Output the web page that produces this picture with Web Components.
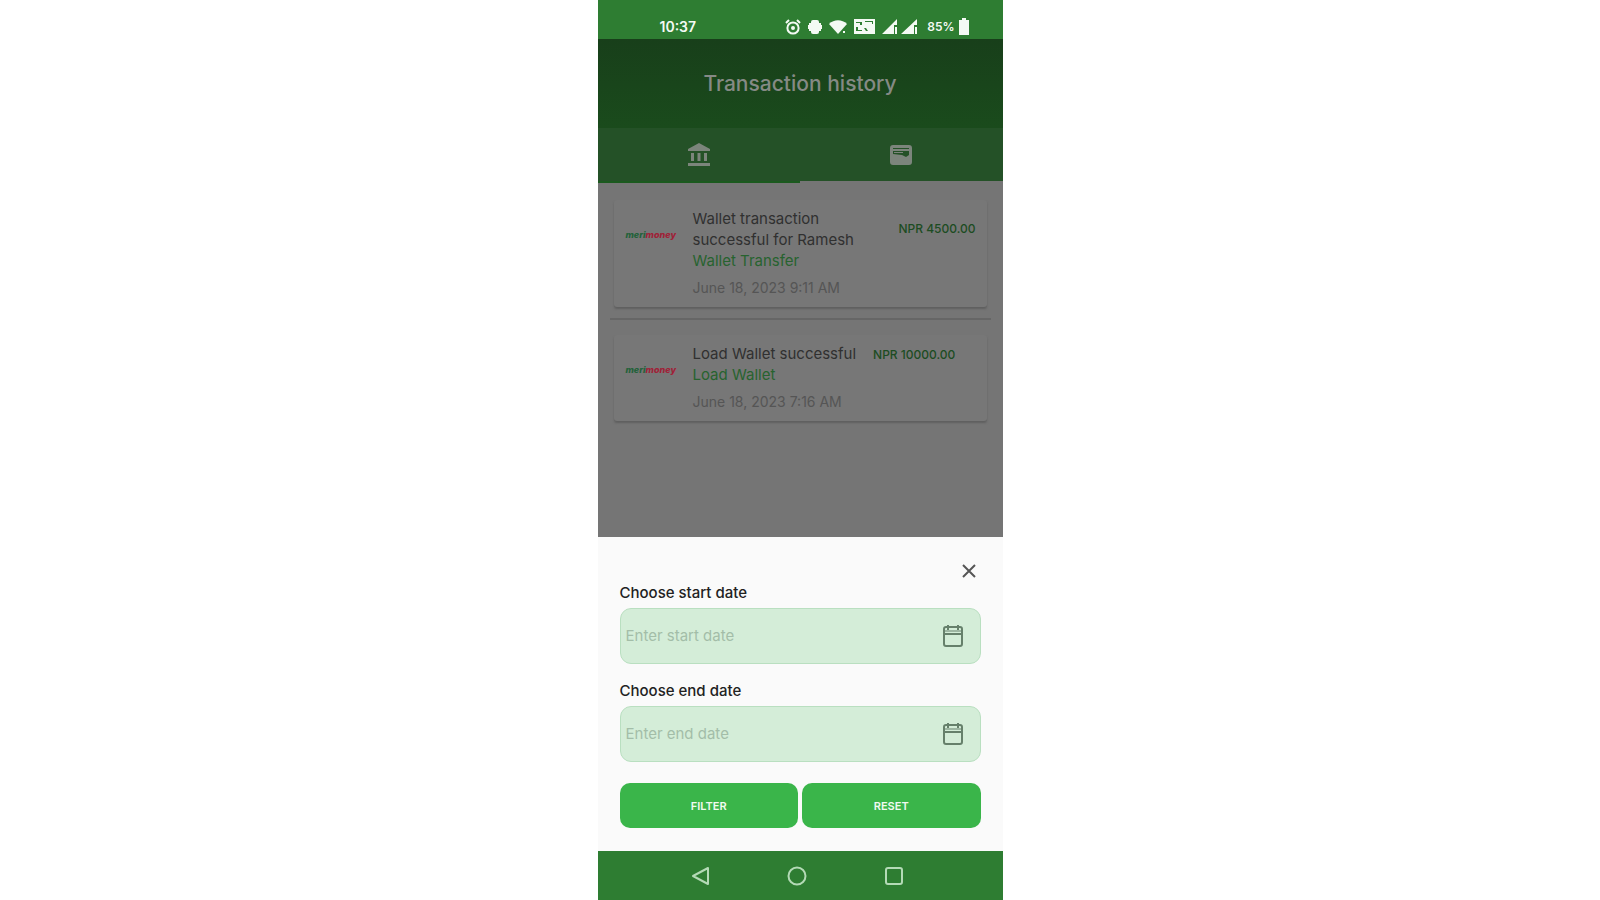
<!DOCTYPE html>
<html lang="en">
<head>
<meta charset="utf-8">
<meta name="viewport" content="width=device-width, initial-scale=1">
<title>Transaction history</title>
<style>
  body {
    margin: 0;
    background: #fff;
    font-family: Inter, "Open Sans", sans-serif;
  }
</style>
</head>
<body>
<wallet-app></wallet-app>

<script>
class StatusBar extends HTMLElement {
  constructor() {
    super();
    this.attachShadow({mode: "open"});
  }
  connectedCallback() {
    this.shadowRoot.innerHTML = `
      <style>
        :host {
          display: flex;
          align-items: center;
          justify-content: space-between;
          box-sizing: border-box;
          height: 39px;
          padding: 14px 34px 0 62px;
          background: #2e7d32;
          color: #f4faf4;
          font: 600 14px/16px Inter, sans-serif;
        }
        .icons { display: flex; align-items: center; gap: 7px; }
        .level { display: flex; align-items: center; gap: 4px; font-size: 12px; }
        svg { display: block; fill: currentColor; }
        .alarm { fill: none; stroke: currentColor; stroke-width: 2; }
      </style>
      <span>10:37</span>
      <div class="icons">
        <svg class="alarm" width="16" height="16" viewBox="0 0 16 16">
          <circle cx="8" cy="9" r="5.6"/><path d="M1 4l3-3M15 4l-3-3"/><circle cx="8" cy="9" r="1"/>
        </svg>
        <svg width="14" height="16" viewBox="0 0 14 16">
          <rect x="3" y="1" width="8" height="14" rx="2"/><path d="M1 4h2v8H1zM11 4h2v8h-2zM0 6h1v4H0zM13 6h1v4h-1z"/>
        </svg>
        <svg width="18" height="14" viewBox="0 0 18 14"><path d="M0 4C5-1 13-1 18 4L9 14z"/><path d="M14 11h2v2h-2z"/></svg>
        <svg width="21" height="15" viewBox="0 0 21 15">
          <path fill-rule="evenodd" d="M0 0h21v15H0zM2 3v1h4v2h2V3zM2 8v4h6v-1H4V8zM11 2v1h7v2h1V2zM10 9l2 3h2l-2-3z"/>
        </svg>
        <svg width="38" height="15" viewBox="0 0 38 15">
          <path d="M15 0v6h-3v9H0zM13 8h2v7h-2zM35 0v6h-3v9H19zM33 8h2v7h-2z"/>
        </svg>
        <span class="level">85%
          <svg width="10" height="17" viewBox="0 0 10 17"><path d="M3 0h4v2h3v15H0V2h3z"/></svg>
        </span>
      </div>`;
  }
}
customElements.define("status-bar", StatusBar);

class HistoryHeader extends HTMLElement {
  constructor() {
    super();
    this.attachShadow({mode: "open"});
  }
  connectedCallback() {
    this.shadowRoot.innerHTML = `
      <style>
        :host { display: block; color: #858a85; }
        h1 {
          box-sizing: border-box;
          height: 89px;
          margin: 0;
          padding-top: 30px;
          background: linear-gradient(#183f1a, #1a4b1c);
          font-size: 21px;
          line-height: 30px;
          font-weight: 500;
          text-align: center;
        }
        nav { display: grid; grid-template-columns: 1fr 1fr; background: #245127; }
        button {
          display: grid;
          place-items: center;
          height: 55px;
          padding: 0;
          border: 0;
          border-bottom: 2px solid #1b5a1e;
          background: none;
          color: #7c857c;
        }
        button[aria-selected="true"] { border-color: #757575; }
        svg { display: block; fill: currentColor; }
      </style>
      <h1><slot></slot></h1>
      <nav role="tablist">
        <button role="tab" aria-label="Bank" aria-selected="false">
          <svg width="24" height="24" viewBox="0 0 24 24">
            <path d="M12 0l11 6v2H1V6zM4 10h3v8H4zM10.500 10h3v8h-3zM17 10h3v8h-3zM1 20h22v3H1z"/>
          </svg>
        </button>
        <button role="tab" aria-label="Wallet" aria-selected="true">
          <svg width="24" height="22" viewBox="0 0 24 22">
            <path fill-rule="evenodd" d="M4 1h16q3 0 3 3v14q0 3-3 3H4q-3 0-3-3V4q0-3 3-3zM4 4v1h16V4zM4 7v3l9 1 4 2 3-2V7z"/>
            <path d="M5 8h9v1H5z"/>
          </svg>
        </button>
      </nav>`;
  }
}
customElements.define("history-header", HistoryHeader);

class TransactionCard extends HTMLElement {
  constructor() {
    super();
    this.attachShadow({mode: "open"});
  }
  connectedCallback() {
    this.shadowRoot.innerHTML = `
      <style>
        :host {
          display: flex;
          align-items: flex-start;
          margin: 0 4px;
          padding: 8px 11px 9px 12px;
          border-radius: 3px;
          background: #777;
          box-shadow: 0 2px 2px #5f5f5f;
          font-size: 15px;
          line-height: 21px;
        }
        .logo {
          flex: 0 0 67px;
          padding-top: 18px;
          color: #23623a;
          font: italic 800 9px/18px Inter, sans-serif;
        }
        .logo b { color: #a02238; font-weight: 800; }
        p { margin: 0; }
        .title { color: #303030; }
        .kind { color: #27632f; }
        .date { margin-top: 6px; color: #555; font-size: 14px; }
        .amount {
          margin-left: auto;
          padding-top: 11px;
          color: #1c4c22;
          font-size: 12px;
          line-height: 20px;
          font-weight: 500;
          white-space: nowrap;
        }
        .text { max-width: 170px; }
        :host([inline]) .amount { margin-left: 17px; padding-top: 2px; }
        :host([inline]) .text { white-space: nowrap; }
      </style>
      <div class="logo">meri<b>money</b></div>
      <div class="text">
        <p class="title"><slot></slot></p>
        <p class="kind"><slot name="kind"></slot></p>
        <p class="date"><slot name="date"></slot></p>
      </div>
      <div class="amount"><slot name="amount"></slot></div>`;
  }
}
customElements.define("transaction-card", TransactionCard);

class DateField extends HTMLElement {
  constructor() {
    super();
    this.attachShadow({mode: "open"});
  }
  connectedCallback() {
    this.shadowRoot.innerHTML = `
      <style>
        :host { display: block; }
        label {
          display: block;
          margin-bottom: 5px;
          color: #222;
          font-size: 15px;
          line-height: 20px;
          font-weight: 500;
        }
        .box {
          display: flex;
          align-items: center;
          box-sizing: border-box;
          height: 56px;
          padding: 0 16px 0 5px;
          border: 1px solid #b9dfc0;
          border-radius: 11px;
          background: #d4edd8;
        }
        input {
          flex: 1;
          min-width: 0;
          padding: 0;
          border: 0;
          outline: 0;
          background: none;
          font: 15px/20px Inter, sans-serif;
        }
        input::placeholder { color: #a3bda8; opacity: 1; }
        button { padding: 0; border: 0; background: none; color: #66806b; }
        svg { display: block; fill: none; stroke: currentColor; stroke-width: 2; }
      </style>
      <label for="date">${this.getAttribute("label")}</label>
      <div class="box">
        <input id="date" type="text" placeholder="${this.getAttribute("placeholder")}">
        <button type="button" aria-label="Open calendar">
          <svg width="22" height="24" viewBox="0 0 22 24">
            <rect x="2" y="3" width="18" height="19" rx="2"/>
            <path d="M2 10h18M6 1v5M16 1v5"/><path d="M3 7h16" stroke-opacity=".5"/>
          </svg>
        </button>
      </div>`;
  }
}
customElements.define("date-field", DateField);

class FilterSheet extends HTMLElement {
  constructor() {
    super();
    this.attachShadow({mode: "open"});
  }
  connectedCallback() {
    this.shadowRoot.innerHTML = `
      <style>
        :host { display: block; padding: 24px 22px 23px; background: #fafafa; }
        .close {
          display: block;
          margin: 0 2px 0 auto;
          padding: 2px;
          border: 0;
          background: none;
        }
        .close svg { display: block; fill: none; stroke: #555; stroke-width: 2; }
        form { display: grid; gap: 17px; margin-top: 2px; }
        .actions { display: grid; grid-template-columns: 1fr 1fr; gap: 4px; margin-top: 4px; }
        .actions button {
          height: 45px;
          border: 0;
          border-radius: 10px;
          background: #3ab54a;
          color: #f0faf1;
          font: 600 11px/16px Inter, sans-serif;
        }
      </style>
      <button class="close" aria-label="Close">
        <svg width="16" height="16" viewBox="0 0 16 16"><path d="M2 2l12 12M14 2L2 14"/></svg>
      </button>
      <form>
        <date-field label="Choose start date" placeholder="Enter start date"></date-field>
        <date-field label="Choose end date" placeholder="Enter end date"></date-field>
        <div class="actions">
          <button type="button">FILTER</button>
          <button type="reset">RESET</button>
        </div>
      </form>`;
  }
}
customElements.define("filter-sheet", FilterSheet);

class SystemNav extends HTMLElement {
  constructor() {
    super();
    this.attachShadow({mode: "open"});
  }
  connectedCallback() {
    this.shadowRoot.innerHTML = `
      <style>
        :host {
          display: flex;
          justify-content: center;
          align-items: center;
          gap: 77px;
          box-sizing: border-box;
          height: 49px;
          padding-right: 6px;
          background: #2e7d32;
        }
        button { padding: 0; border: 0; background: none; }
        svg { display: block; fill: none; stroke: #b4dab6; stroke-width: 2; stroke-linejoin: round; }
      </style>
      <button aria-label="Back"><svg width="20" height="20" viewBox="0 0 20 20"><path d="M18 2v16L3 10z"/></svg></button>
      <button aria-label="Home"><svg width="20" height="20" viewBox="0 0 20 20"><circle cx="10" cy="10" r="8.500"/></svg></button>
      <button aria-label="Recents"><svg width="20" height="20" viewBox="0 0 20 20"><rect x="2" y="2" width="16" height="16" rx="2"/></svg></button>`;
  }
}
customElements.define("system-nav", SystemNav);

class WalletApp extends HTMLElement {
  constructor() {
    super();
    this.attachShadow({mode: "open"});
  }
  connectedCallback() {
    this.shadowRoot.innerHTML = `
      <style>
        :host {
          display: flex;
          flex-direction: column;
          min-height: 100vh;
          width: 45vh;
          min-width: 320px;
          max-width: 100%;
          margin: 0 auto;
        }
        main { flex: 1; padding: 17px 12px; background: #757575; }
        hr { margin: 11px 0 15px; border: 0; border-top: 2px solid #666; }
      </style>
      <status-bar></status-bar>
      <history-header>Transaction history</history-header>
      <main>
        <transaction-card>
          Wallet transaction successful for Ramesh
          <span slot="kind">Wallet Transfer</span>
          <span slot="date">June 18, 2023 9:11 AM</span>
          <span slot="amount">NPR 4500.00</span>
        </transaction-card>
        <hr>
        <transaction-card inline>
          Load Wallet successful
          <span slot="kind">Load Wallet</span>
          <span slot="date">June 18, 2023 7:16 AM</span>
          <span slot="amount">NPR 10000.00</span>
        </transaction-card>
      </main>
      <filter-sheet></filter-sheet>
      <system-nav></system-nav>`;
  }
}
customElements.define("wallet-app", WalletApp);
</script>
</body>
</html>
